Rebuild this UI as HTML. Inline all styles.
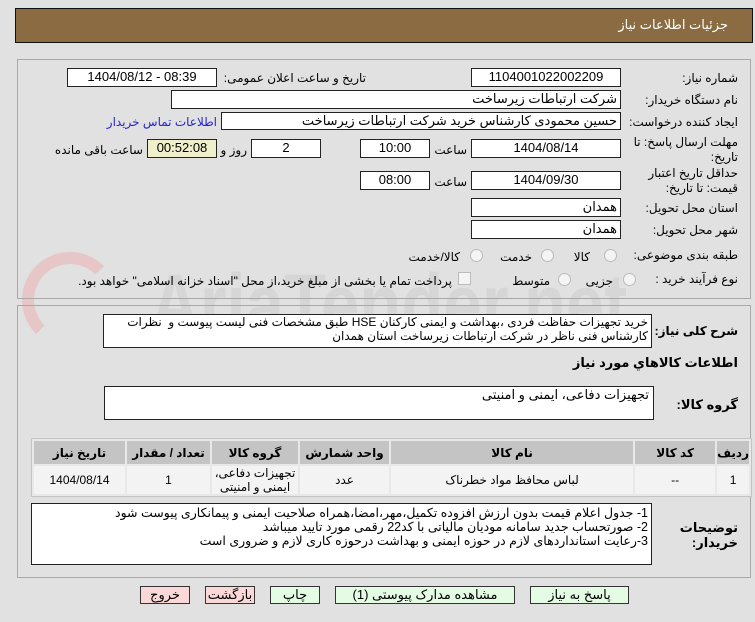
<!DOCTYPE html>
<html><head><meta charset="utf-8"><style>
body{margin:0;width:755px;height:622px;background:#e1e1e1;font-family:"Liberation Sans","DejaVu Sans",sans-serif;font-size:12px;color:#000;position:relative;overflow:hidden}
.a{position:absolute}
.box{position:absolute;background:#fff;border:1px solid #222;box-sizing:border-box;text-align:center;line-height:16px;font-size:13px}
.l{position:absolute;direction:rtl;white-space:nowrap;font-size:12px}
.panel{position:absolute;border:1px solid #a8a8a8;box-sizing:border-box}
.rad{position:absolute;width:11px;height:11px;border:1px solid #bbb;border-radius:50%;background:#f4f4f4}
.btn{position:absolute;border:1px solid #333;box-sizing:border-box;text-align:center;line-height:16px;font-size:13px;direction:rtl}
.g{background:#e4fbe4}.r{background:#fbd8d8}
table{border-collapse:separate;border-spacing:2px}
td{text-align:center;font-size:12px;padding:0}
</style></head><body>
<div class="a" style="left:150px;top:262px;font-size:84px;font-weight:bold;color:#d6d6d6;line-height:84px;transform:scaleX(0.82);transform-origin:0 0;white-space:nowrap">AriaTender.net</div>
<div class="a" style="left:22px;top:252px;width:72px;height:72px;border:12px solid #e6c6c6;border-radius:50%;border-bottom-color:transparent;border-right-color:transparent"></div>

<div class="a" style="left:15px;top:8px;width:738px;height:35px;background:#8b6c42;border:1px solid #111;box-sizing:border-box"></div>
<div class="l" style="right:27px;top:17px;color:#fff;font-size:13px">جزئیات اطلاعات نیاز</div>

<div class="panel" style="left:17px;top:59px;width:734px;height:240px"></div>
<div class="l" style="right:17px;top:71px">شماره نیاز:</div>
<div class="box" style="left:471px;top:68px;width:150px;height:19px">1104001022002209</div>
<div class="l" style="right:389px;top:71px">تاریخ و ساعت اعلان عمومی:</div>
<div class="box" style="left:67px;top:68px;width:150px;height:19px">1404/08/12 - 08:39</div>

<div class="l" style="right:17px;top:93px">نام دستگاه خریدار:</div>
<div class="box" style="left:171px;top:90px;width:450px;height:19px;text-align:right;padding-right:3px">شرکت ارتباطات زیرساخت</div>

<div class="l" style="right:17px;top:115px">ایجاد کننده درخواست:</div>
<div class="box" style="left:221px;top:112px;width:400px;height:18px;text-align:right;padding-right:3px;direction:rtl">حسین محمودی کارشناس خرید شرکت ارتباطات زیرساخت</div>
<div class="l" style="right:538px;top:115px;color:#2525d0">اطلاعات تماس خریدار</div>

<div class="l" style="right:17px;top:135px;line-height:15px;text-align:right">مهلت ارسال پاسخ: تا<br>تاریخ:</div>
<div class="box" style="left:471px;top:139px;width:150px;height:19px">1404/08/14</div>
<div class="l" style="right:288px;top:143px">ساعت</div>
<div class="box" style="left:360px;top:139px;width:70px;height:19px">10:00</div>
<div class="box" style="left:251px;top:139px;width:70px;height:19px">2</div>
<div class="l" style="right:508px;top:143px">روز و</div>
<div class="box" style="left:147px;top:139px;width:70px;height:19px;background:#efefcc">00:52:08</div>
<div class="l" style="right:612px;top:143px">ساعت باقی مانده</div>

<div class="l" style="right:17px;top:166px;line-height:15px;text-align:right">حداقل تاریخ اعتبار<br>قیمت: تا تاریخ:</div>
<div class="box" style="left:471px;top:171px;width:150px;height:19px">1404/09/30</div>
<div class="l" style="right:288px;top:175px">ساعت</div>
<div class="box" style="left:360px;top:171px;width:70px;height:19px">08:00</div>

<div class="l" style="right:17px;top:201px">استان محل تحویل:</div>
<div class="box" style="left:471px;top:198px;width:150px;height:19px;text-align:right;padding-right:3px">همدان</div>
<div class="l" style="right:17px;top:223px">شهر محل تحویل:</div>
<div class="box" style="left:471px;top:220px;width:150px;height:19px;text-align:right;padding-right:3px">همدان</div>

<div class="l" style="right:17px;top:248px">طبقه بندی موضوعی:</div>
<div class="rad" style="left:604px;top:249px"></div><div class="l" style="right:165px;top:250px">کالا</div>
<div class="rad" style="left:541px;top:249px"></div><div class="l" style="right:223px;top:250px">خدمت</div>
<div class="rad" style="left:470px;top:249px"></div><div class="l" style="right:295px;top:250px">کالا/خدمت</div>

<div class="l" style="right:17px;top:272px">نوع فرآیند خرید :</div>
<div class="rad" style="left:623px;top:273px"></div><div class="l" style="right:142px;top:274px">جزیی</div>
<div class="rad" style="left:558px;top:273px"></div><div class="l" style="right:205px;top:274px">متوسط</div>
<div class="a" style="left:458px;top:272px;width:11px;height:11px;border:1px solid #bbb;background:#f4f4f4"></div>
<div class="l" style="right:303px;top:274px">پرداخت تمام یا بخشی از مبلغ خرید،از محل "اسناد خزانه اسلامی" خواهد بود.</div>

<div class="panel" style="left:17px;top:305px;width:734px;height:273px"></div>
<div class="l" style="right:17px;top:324px;font-weight:bold;font-size:12px">شرح کلی نیاز:</div>
<div class="box" style="left:103px;top:314px;width:549px;height:34px;text-align:right;padding-right:3px;direction:rtl;line-height:14px;font-size:12px">خرید تجهیزات حفاظت فردی ،بهداشت و ایمنی کارکنان HSE طبق مشخصات فنی لیست پیوست و &nbsp;نظرات کارشناس فنی ناظر در شرکت ارتباطات زیرساخت استان همدان</div>
<div class="l" style="right:17px;top:355px;font-weight:bold;font-size:13px">اطلاعات کالاهاي مورد نياز</div>
<div class="l" style="right:17px;top:397px;font-weight:bold;font-size:13px">گروه کالا:</div>
<div class="box" style="left:104px;top:386px;width:550px;height:34px;text-align:right;padding-right:4px;direction:rtl">تجهیزات دفاعی، ایمنی و امنیتی</div>

<div class="a" style="left:31px;top:438px;width:721px;height:59px;border:1px solid #c4c4c4;box-sizing:border-box;background:#e8e8e8">
<table style="width:100%;direction:rtl">
<tr style="height:23px;background:#c4c4c4;font-weight:bold"><td style="width:28px">ردیف</td><td style="width:80px">کد کالا</td><td>نام کالا</td><td style="width:89px">واحد شمارش</td><td style="width:86px">گروه کالا</td><td style="width:83px">تعداد / مقدار</td><td style="width:91px">تاریخ نیاز</td></tr>
<tr style="height:28px;background:#f3f3f3"><td>1</td><td>--</td><td>لباس محافظ مواد خطرناک</td><td>عدد</td><td style="line-height:14px">تجهیزات دفاعی، ایمنی و امنیتی</td><td>1</td><td>1404/08/14</td></tr>
</table></div>

<div class="l" style="right:17px;top:520px;font-weight:bold;font-size:13px;line-height:15px;text-align:right">توضیحات<br>خریدار:</div>
<div class="box" style="left:31px;top:503px;width:621px;height:62px;text-align:right;padding-right:3px;direction:rtl;line-height:14px;font-size:12.5px;padding-top:2px">1- جدول اعلام قیمت بدون ارزش افزوده تکمیل،مهر،امضا،همراه صلاحیت ایمنی و پیمانکاری پیوست شود<br>2- صورتحساب جدید سامانه مودیان مالیاتی با کد22 رقمی مورد تایید میباشد<br>3-رعایت استانداردهای لازم در حوزه ایمنی و بهداشت درحوزه کاری لازم و ضروری است</div>

<div class="btn g" style="left:530px;top:586px;width:99px;height:18px">پاسخ به نیاز</div>
<div class="btn g" style="left:335px;top:586px;width:180px;height:18px">مشاهده مدارک پیوستی (1)</div>
<div class="btn g" style="left:270px;top:586px;width:50px;height:18px">چاپ</div>
<div class="btn r" style="left:205px;top:586px;width:50px;height:18px">بازگشت</div>
<div class="btn r" style="left:140px;top:586px;width:50px;height:18px">خروج</div>
</body></html>
